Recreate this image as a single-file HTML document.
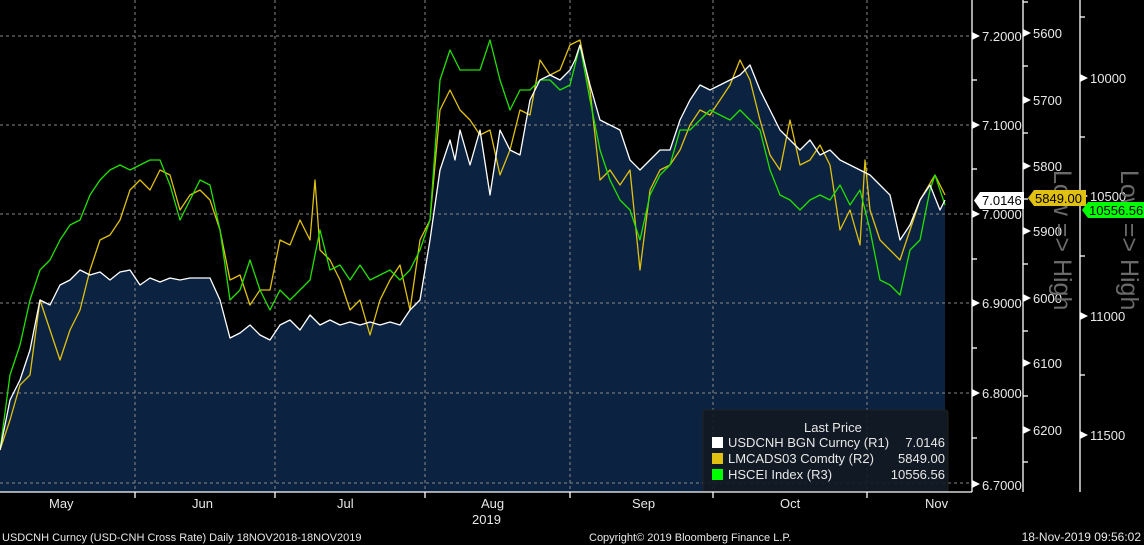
<!DOCTYPE html>
<html><head><meta charset="utf-8"><style>
html,body{margin:0;padding:0;background:#000;width:1144px;height:545px;overflow:hidden}
svg{display:block}
text{font-family:"Liberation Sans",sans-serif;fill:#e8e8e8}
</style></head><body>
<svg width="1144" height="545" viewBox="0 0 1144 545">
<rect width="1144" height="545" fill="#000"/>
<path fill="#0b2340" d="M0,450 L10,400 L20,380 L30,350 L40,300 L50,305 L60,285 L70,280 L80,270 L90,275 L100,272 L110,280 L120,272 L130,270 L140,285 L150,278 L160,282 L170,278 L180,280 L190,278 L200,278 L210,278 L220,300 L230,338 L240,333 L250,325 L260,335 L270,340 L280,325 L290,320 L300,330 L310,315 L320,325 L330,320 L340,325 L350,322 L360,325 L370,322 L380,325 L390,322 L400,325 L410,310 L420,300 L430,240 L440,170 L450,140 L455,160 L460,130 L470,165 L480,130 L490,195 L500,130 L510,150 L520,155 L530,100 L540,80 L550,75 L560,80 L570,70 L575,60 L580,45 L590,85 L600,120 L610,125 L620,130 L630,160 L640,170 L650,160 L660,150 L670,150 L680,120 L690,100 L700,85 L710,90 L720,85 L730,80 L740,75 L750,65 L760,90 L770,110 L780,130 L790,140 L800,150 L810,140 L820,155 L830,150 L840,160 L850,165 L860,170 L870,175 L880,185 L890,195 L900,240 L910,225 L920,200 L930,185 L940,210 L945,200 L945,492 L0,492 Z"/>
<g stroke="#888" stroke-dasharray="3,3" stroke-width="1">
<line x1="0" y1="36" x2="971" y2="36"/><line x1="0" y1="125" x2="971" y2="125"/><line x1="0" y1="214" x2="971" y2="214"/><line x1="0" y1="303" x2="971" y2="303"/><line x1="0" y1="393" x2="971" y2="393"/><line x1="0" y1="483" x2="971" y2="483"/>
<line x1="135" y1="0" x2="135" y2="492"/><line x1="275" y1="0" x2="275" y2="492"/><line x1="425" y1="0" x2="425" y2="492"/><line x1="570" y1="0" x2="570" y2="492"/><line x1="713" y1="0" x2="713" y2="492"/><line x1="867" y1="0" x2="867" y2="492"/>
</g>
<g fill="none" stroke-width="1.3" stroke-linejoin="round">
<polyline stroke="#e0c010" points="0,450 10,420 20,385 30,375 40,300 50,330 60,360 70,330 80,310 90,270 100,240 110,235 120,220 130,190 140,180 150,190 160,170 170,175 180,210 190,195 200,190 210,200 220,230 230,280 240,275 250,305 260,290 270,290 280,240 290,245 300,220 310,240 315,180 320,250 330,260 340,280 350,310 360,300 370,335 380,300 390,280 400,265 410,310 420,240 430,220 440,110 450,90 460,110 470,120 480,135 490,130 500,175 510,150 520,110 530,115 540,60 550,75 560,70 570,45 580,40 590,90 600,180 610,170 620,185 630,170 640,270 650,190 660,170 670,165 680,150 690,125 700,110 710,115 720,100 730,85 740,60 750,80 760,120 770,155 780,170 790,120 800,165 810,160 820,145 830,165 840,230 850,210 860,245 865,160 870,210 880,240 890,250 900,260 910,230 920,200 935,175 945,195"/>
<polyline stroke="#22e000" points="0,450 10,375 20,345 30,300 40,270 50,260 60,240 70,225 80,220 90,195 100,180 110,170 120,165 130,170 140,165 150,160 160,160 170,185 180,220 190,200 200,180 210,185 220,230 230,300 240,290 250,260 260,290 270,310 280,290 290,300 300,290 310,280 320,230 330,270 340,265 350,280 360,265 370,280 380,275 390,270 400,280 410,270 420,250 430,220 440,80 450,50 460,70 470,70 480,70 490,40 500,80 510,110 520,90 530,90 540,80 550,80 560,90 570,85 580,45 590,100 600,150 610,180 620,200 630,210 640,240 650,195 660,175 670,165 680,130 690,130 700,120 710,110 720,115 730,120 740,110 750,120 760,130 770,170 780,195 790,200 800,210 810,200 820,195 830,200 840,185 850,205 860,190 870,230 880,280 890,285 900,295 910,250 920,240 930,190 935,175 945,205"/>
<polyline stroke="#fff" points="0,450 10,400 20,380 30,350 40,300 50,305 60,285 70,280 80,270 90,275 100,272 110,280 120,272 130,270 140,285 150,278 160,282 170,278 180,280 190,278 200,278 210,278 220,300 230,338 240,333 250,325 260,335 270,340 280,325 290,320 300,330 310,315 320,325 330,320 340,325 350,322 360,325 370,322 380,325 390,322 400,325 410,310 420,300 430,240 440,170 450,140 455,160 460,130 470,165 480,130 490,195 500,130 510,150 520,155 530,100 540,80 550,75 560,80 570,70 575,60 580,45 590,85 600,120 610,125 620,130 630,160 640,170 650,160 660,150 670,150 680,120 690,100 700,85 710,90 720,85 730,80 740,75 750,65 760,90 770,110 780,130 790,140 800,150 810,140 820,155 830,150 840,160 850,165 860,170 870,175 880,185 890,195 900,240 910,225 920,200 930,185 940,210 945,200"/>
</g>
<rect x="703" y="410" width="245" height="82" rx="3" fill="#121a22" fill-opacity="0.92" stroke="#222"/>
<text x="804" y="432" font-size="13">Last Price</text>
<rect x="712" y="437" width="11" height="11" fill="#fff"/>
<rect x="712" y="453" width="11" height="11" fill="#e0c010"/>
<rect x="712" y="469" width="11" height="11" fill="#00ff00"/>
<g font-size="13">
<text x="728" y="447">USDCNH BGN Curncy  (R1)</text><text x="945" y="447" text-anchor="end">7.0146</text>
<text x="728" y="463">LMCADS03 Comdty  (R2)</text><text x="945" y="463" text-anchor="end">5849.00</text>
<text x="728" y="479">HSCEI Index  (R3)</text><text x="945" y="479" text-anchor="end">10556.56</text>
</g>
<g stroke="#fff" stroke-width="1.3">
<line x1="0" y1="492" x2="972" y2="492"/>
<line x1="972" y1="0" x2="972" y2="492"/>
<line x1="1023" y1="0" x2="1023" y2="492"/>
<line x1="1080" y1="0" x2="1080" y2="492"/>
<line x1="135" y1="492" x2="135" y2="498"/><line x1="275" y1="492" x2="275" y2="498"/><line x1="425" y1="492" x2="425" y2="498"/><line x1="570" y1="492" x2="570" y2="498"/><line x1="713" y1="492" x2="713" y2="498"/><line x1="867" y1="492" x2="867" y2="498"/>
<line x1="972" y1="80" x2="977" y2="80"/><line x1="972" y1="169" x2="977" y2="169"/><line x1="972" y1="259" x2="977" y2="259"/><line x1="972" y1="348" x2="977" y2="348"/><line x1="972" y1="438" x2="977" y2="438"/>
<line x1="1023" y1="66" x2="1028" y2="66"/><line x1="1023" y1="133" x2="1028" y2="133"/><line x1="1023" y1="199" x2="1028" y2="199"/><line x1="1023" y1="264" x2="1028" y2="264"/><line x1="1023" y1="331" x2="1028" y2="331"/><line x1="1023" y1="396" x2="1028" y2="396"/><line x1="1023" y1="462" x2="1028" y2="462"/><line x1="1023" y1="2" x2="1028" y2="2"/>
<line x1="1080" y1="17" x2="1085" y2="17"/><line x1="1080" y1="137" x2="1085" y2="137"/><line x1="1080" y1="256" x2="1085" y2="256"/><line x1="1080" y1="375" x2="1085" y2="375"/>
</g>
<g fill="#fff">
<path d="M972,32 l8,4 l-8,4z"/><path d="M972,121 l8,4 l-8,4z"/><path d="M972,210 l8,4 l-8,4z"/><path d="M972,299 l8,4 l-8,4z"/><path d="M972,389 l8,4 l-8,4z"/><path d="M972,480 l8,4 l-8,4z"/>
<path d="M1023,29 l8,4 l-8,4z"/><path d="M1023,96 l8,4 l-8,4z"/><path d="M1023,162 l8,4 l-8,4z"/><path d="M1023,227 l8,4 l-8,4z"/><path d="M1023,294 l8,4 l-8,4z"/><path d="M1023,359 l8,4 l-8,4z"/><path d="M1023,426 l8,4 l-8,4z"/>
<path d="M1080,74 l8,4 l-8,4z"/><path d="M1080,192 l8,4 l-8,4z"/><path d="M1080,312 l8,4 l-8,4z"/><path d="M1080,431 l8,4 l-8,4z"/>
</g>
<g font-size="13">
<text x="982" y="41">7.2000</text><text x="982" y="130">7.1000</text><text x="982" y="219">7.0000</text><text x="982" y="308">6.9000</text><text x="982" y="398">6.8000</text><text x="982" y="490">6.7000</text>
<text x="1033" y="38">5600</text><text x="1033" y="105">5700</text><text x="1033" y="171">5800</text><text x="1033" y="236">5900</text><text x="1033" y="303">6000</text><text x="1033" y="368">6100</text><text x="1033" y="435">6200</text>
<text x="1090" y="83">10000</text><text x="1090" y="201">10500</text><text x="1090" y="321">11000</text><text x="1090" y="440">11500</text>
</g>
<g font-size="25">
<text transform="translate(1054,170) rotate(90)" style="fill:#6a6a6a">Low =&gt; High</text>
<text transform="translate(1121,170) rotate(90)" style="fill:#6a6a6a">Low =&gt; High</text>
</g>
<path d="M980,192 L1024,192 L1024,209 L980,209 L974,200.5Z" fill="#fff"/>
<text x="982" y="205" font-size="13" style="fill:#000">7.0146</text>
<path d="M1034,190 L1086,190 L1086,206 L1034,206 L1028,198Z" fill="#e0c010"/>
<text x="1035" y="203" font-size="13" style="fill:#000">5849.00</text>
<path d="M1088,202 L1144,202 L1144,218 L1088,218 L1082,210Z" fill="#00ff00"/>
<text x="1089" y="215" font-size="13" style="fill:#000">10556.56</text>
<g font-size="13">
<text x="49" y="508">May</text><text x="192" y="508">Jun</text><text x="337" y="508">Jul</text><text x="481" y="508">Aug</text><text x="632" y="508">Sep</text><text x="780" y="508">Oct</text><text x="925" y="508">Nov</text>
<text x="472" y="524">2019</text>
</g>
<g font-size="11">
<text x="2" y="541">USDCNH Curncy (USD-CNH Cross Rate)  Daily 18NOV2018-18NOV2019</text>
<text x="589" y="541">Copyright© 2019 Bloomberg Finance L.P.</text>
<text x="1141" y="541" text-anchor="end" font-size="12">18-Nov-2019 09:56:02</text>
</g>
</svg>
</body></html>
